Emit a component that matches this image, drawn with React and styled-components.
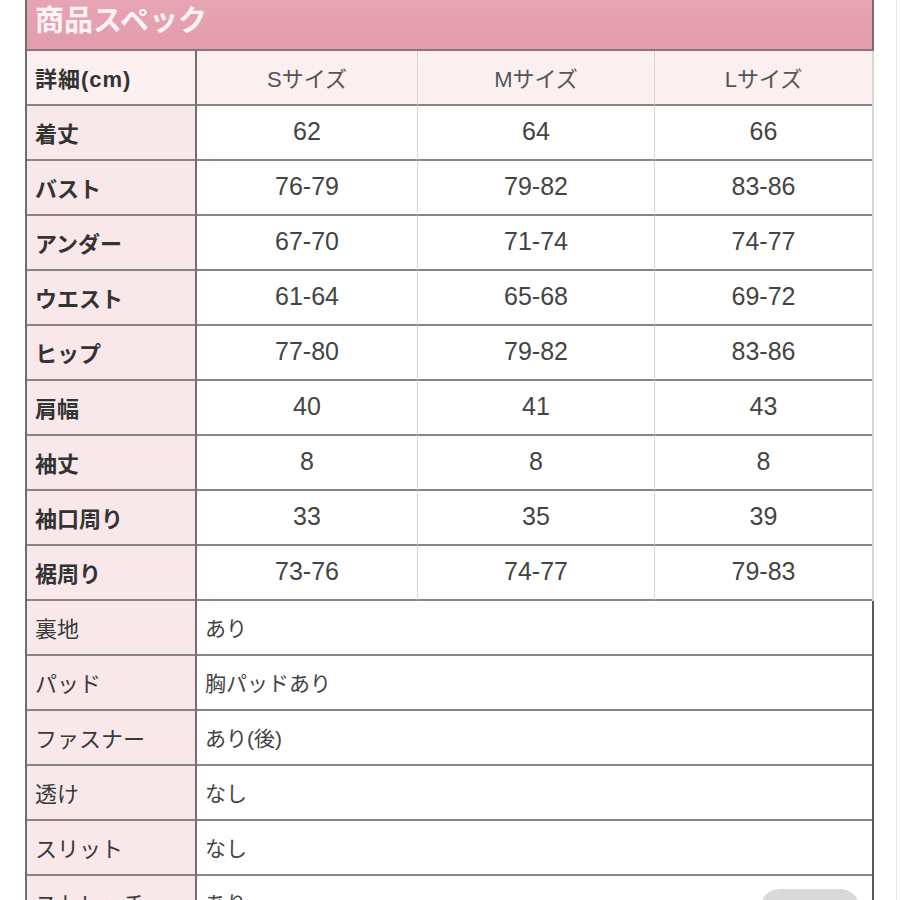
import styled, { createGlobalStyle } from "styled-components";

const GlobalStyle = createGlobalStyle`
  html, body {
    margin: 0;
    padding: 0;
    background: #fff;
    overflow: hidden;
  }
  body {
    font-family: "Liberation Sans", "Noto Sans CJK JP", sans-serif;
    color: #3a3a3a;
  }
`;

const Page = styled.div`
  position: relative;
  width: 897px;
  height: 900px;
  overflow: hidden;
  padding-left: 25px;
  box-sizing: border-box;
  border-right: 1px solid #e6e6e6;
`;

const Table = styled.div`
  width: 849px;
  border-left: 2px solid #6f6f6f;
  box-sizing: border-box;
`;

const Band = styled.div`
  height: 49px;
  background: linear-gradient(#e7a4b4, #e29cad);
  border-bottom: 2px solid #8c7479;
  border-right: 2px solid #7a6a6e;
  display: flex;
  align-items: flex-start;
  padding-left: 8px;
  color: #fdf3f5;
  font-family: "Noto Sans CJK JP", sans-serif;
  font-weight: 700;
  font-size: 29px;
  line-height: 36px;
`;

const Grid = styled.div`
  display: grid;
  grid-template-columns: ${(p) => p.$cols};
  border-right: 2px solid ${(p) => p.$edge};
`;

const Cell = styled.div`
  height: 51px;
  padding-bottom: 2px;
  box-sizing: content-box;
  display: flex;
  align-items: center;
  border-bottom: 2px solid #858585;
  border-right: ${(p) => (p.$last ? "none" : p.$dark ? "2px solid #6f6f6f" : "1px solid #d6d6d6")};
  background: ${(p) => p.$bg || "#fff"};
  justify-content: ${(p) => (p.$center ? "center" : "flex-start")};
  padding-left: ${(p) => (p.$center ? "0" : "8px")};
  font-size: ${(p) => p.$size || 22}px;
  font-weight: ${(p) => (p.$bold ? 700 : 400)};
  letter-spacing: ${(p) => p.$track || 0}px;
  color: ${(p) => p.$color || "#444"};
  white-space: nowrap;
  overflow: hidden;
`;

const Pill = styled.div`
  position: absolute;
  left: 760px;
  top: 889px;
  width: 100px;
  height: 40px;
  border-radius: 20px;
  background: #d9d9d9;
`;

const LABEL_BG = "#f8e8ea";
const HEAD_BG = "#fbeff0";

const sizes = [
  ["着丈", "62", "64", "66"],
  ["バスト", "76-79", "79-82", "83-86"],
  ["アンダー", "67-70", "71-74", "74-77"],
  ["ウエスト", "61-64", "65-68", "69-72"],
  ["ヒップ", "77-80", "79-82", "83-86"],
  ["肩幅", "40", "41", "43"],
  ["袖丈", "8", "8", "8"],
  ["袖口周り", "33", "35", "39"],
  ["裾周り", "73-76", "74-77", "79-83"],
];

const details = [
  ["裏地", "あり"],
  ["パッド", "胸パッドあり"],
  ["ファスナー", "あり(後)"],
  ["透け", "なし"],
  ["スリット", "なし"],
  ["ストレッチ", "あり"],
];

export default function App() {
  return (
    <>
      <GlobalStyle />
      <Page>
        <Table>
          <Band>商品スペック</Band>
          <Grid $cols="170px 221px 237px 217px" $edge="#d6d6d6">
            <Cell $dark $bold $bg={HEAD_BG} $track={1} $color="#333">詳細(cm)</Cell>
            <Cell $center $bg={HEAD_BG} $color="#555">Sサイズ</Cell>
            <Cell $center $bg={HEAD_BG} $color="#555">Mサイズ</Cell>
            <Cell $center $last $bg={HEAD_BG} $color="#555">Lサイズ</Cell>
            {sizes.map((row) => [
              <Cell key={row[0]} $dark $bold $bg={LABEL_BG} $color="#333">
                {row[0]}
              </Cell>,
              <Cell key={row[0] + "s"} $center $size={25}>{row[1]}</Cell>,
              <Cell key={row[0] + "m"} $center $size={25}>{row[2]}</Cell>,
              <Cell key={row[0] + "l"} $center $last $size={25}>{row[3]}</Cell>,
            ])}
          </Grid>
          <Grid $cols="170px 1fr" $edge="#5a5a5a">
            {details.map((row) => [
              <Cell key={row[0]} $dark $bg={LABEL_BG} $color="#3a3a3a">
                {row[0]}
              </Cell>,
              <Cell key={row[0] + "v"} $last $size={21}>{row[1]}</Cell>,
            ])}
          </Grid>
        </Table>
        <Pill />
      </Page>
    </>
  );
}
